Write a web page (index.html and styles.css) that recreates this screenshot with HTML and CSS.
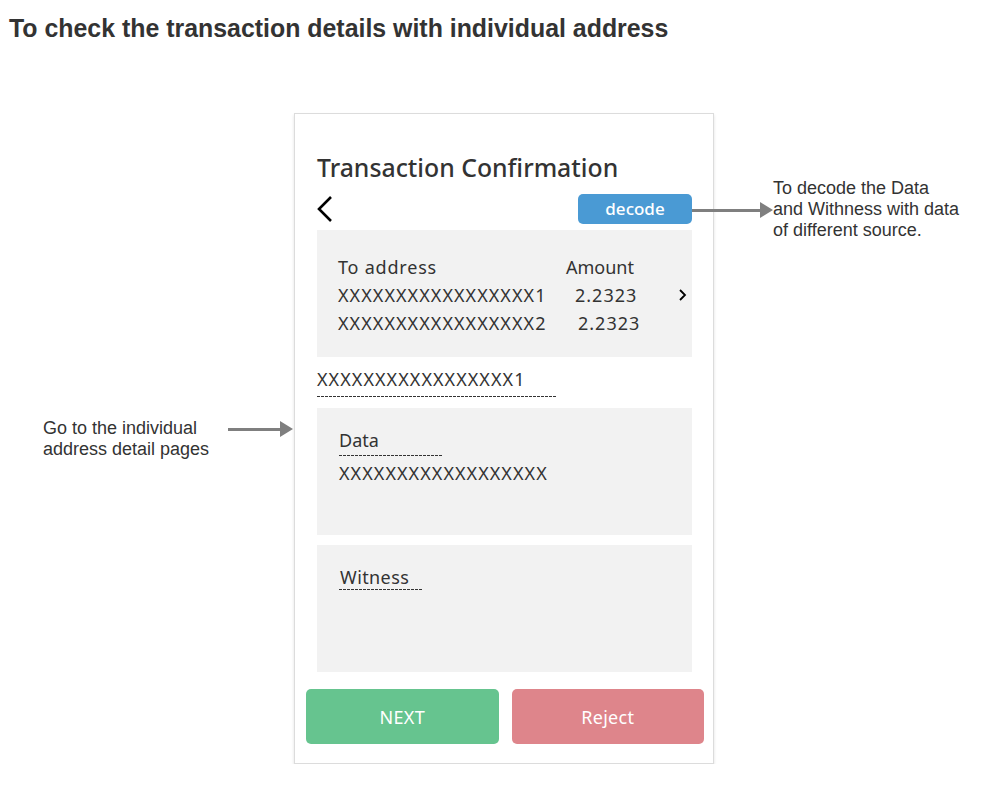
FILE: index.html
```html
<!DOCTYPE html>
<html>
<head>
<meta charset="utf-8">
<link rel="stylesheet" href="styles.css">
</head>
<body>
<h1 class="page-title">To check the transaction details with individual address</h1>
<div class="stage">
  <div class="phone">
    <h2 class="phone-title">Transaction Confirmation</h2>
    <div class="nav-row">
      <svg class="back" width="18" height="28" viewBox="0 0 18 28"><path d="M15 2 L3 14 L15 26" fill="none" stroke="#000" stroke-width="2.6"/></svg>
      <span class="decode">decode</span>
    </div>
    <div class="panel list-panel">
      <div class="list-grid">
        <span class="lbl">To address</span><span class="amt">Amount</span><span></span>
        <span class="xs">XXXXXXXXXXXXXXXXX1</span><span class="num v1">2.2323</span><svg class="chev" width="10" height="14" viewBox="0 0 10 14"><path d="M2 2 L7 7 L2 12" fill="none" stroke="#000" stroke-width="1.8"/></svg>
        <span class="xs">XXXXXXXXXXXXXXXXX2</span><span class="num v2">2.2323</span><span></span>
      </div>
    </div>
    <div class="addr"><span class="dashed addr-text xs">XXXXXXXXXXXXXXXXX1</span></div>
    <div class="panel field-panel">
      <div class="field-label dashed label-data">Data</div>
      <div class="field-value xs">XXXXXXXXXXXXXXXXXX</div>
    </div>
    <div class="panel field-panel witness">
      <div class="field-label dashed label-witness">Witness</div>
    </div>
    <div class="actions">
      <button class="btn next">NEXT</button>
      <button class="btn reject">Reject</button>
    </div>

    <div class="callout callout-right">
      <div class="arrow"><span class="shaft long"></span><span class="head"></span></div>
      <p class="note">To decode the Data<br>and Withness with data<br>of different source.</p>
    </div>
    <div class="callout callout-left">
      <p class="note">Go to the individual<br>address detail pages</p>
      <div class="arrow"><span class="shaft short"></span><span class="head"></span></div>
    </div>
  </div>
</div>
</body>
</html>
```
FILE: styles.css
```css
* { box-sizing: border-box; }
body {
  margin: 0;
  background: #fff;
  font-family: "Liberation Sans", Arial, sans-serif;
  color: #333;
}
.page-title {
  margin: 0;
  padding: 14px 0 0 9px;
  font-size: 24.9px;
  line-height: 28px;
  font-weight: bold;
  color: #333;
}
.stage {
  display: flex;
  justify-content: center;
  padding-top: 71px;
}
.phone {
  position: relative;
  width: 420px;
  height: 651px;
  border: 1px solid #dcdcdc;
  box-shadow: 0 2px 3px rgba(0,0,0,0.12);
  padding: 38px 21px 0 22px;
  font-family: "Noto Sans", "Open Sans", sans-serif;
}
.phone-title {
  margin: 0;
  font-size: 24.8px;
  line-height: 30px;
  font-weight: 500;
  color: #333;
}
.nav-row {
  display: flex;
  justify-content: space-between;
  align-items: center;
  margin-top: 12px;
  height: 30px;
}
.back { display: block; margin-left: -1px; }
.decode {
  width: 114px;
  height: 30px;
  background: #4a9ad4;
  color: #fff;
  border-radius: 5px;
  font-size: 17px;
  line-height: 30px;
  text-align: center;
  font-weight: 500;
}
.panel {
  background: #f2f2f2;
  height: 127px;
}
.list-panel {
  margin-top: 6px;
  padding: 23px 0 0 21px;
}
.list-grid {
  display: grid;
  grid-template-columns: 228px 112px 20px;
  font-size: 18px;
  line-height: 28px;
  color: #333;
  align-items: center;
}
.xs { letter-spacing: 1.05px; }
.lbl { letter-spacing: 0.8px; }
.num { letter-spacing: 1px; }
.v1 { padding-left: 9px; }
.v2 { padding-left: 12px; }
.chev { display: block; }
.addr {
  height: 51px;
  padding-top: 10px;
  font-size: 18px;
  line-height: 24px;
  color: #333;
}
.dashed {
  display: inline-block;
  background-image: linear-gradient(to right, #333 0 3px, transparent 3px 4px);
  background-size: 4px 1px;
  background-repeat: repeat-x;
  background-position: left bottom;
}
.addr-text {
  width: 240px;
  padding-bottom: 6px;
}
.field-panel {
  padding: 20px 0 0 22px;
  font-size: 18px;
  color: #333;
}
.field-label {
  line-height: 24px;
}
.label-data { width: 103px; padding-bottom: 4px; }
.label-witness { width: 84px; padding-left: 1px; padding-bottom: 1px; letter-spacing: 0.4px; }
.field-value {
  line-height: 24px;
  margin-top: 5px;
}
.witness { margin-top: 10px; }
.actions {
  display: flex;
  gap: 13px;
  margin: 17px -12px 0 -11px;
}
.btn {
  flex: 1;
  height: 55px;
  border: none;
  border-radius: 5px;
  color: #fff;
  font-family: "Noto Sans", "Open Sans", sans-serif;
  font-size: 18px;
  letter-spacing: 0.3px;
}
.next { background: #66c48f; }
.reject { background: #de858b; }

.callout {
  position: absolute;
  display: flex;
  font-family: "Liberation Sans", Arial, sans-serif;
}
.note {
  margin: 0;
  font-size: 18px;
  line-height: 21px;
  color: #333;
  white-space: nowrap;
}
.arrow {
  display: flex;
  align-items: center;
  height: 16px;
}
.shaft {
  height: 3px;
  background: #7f7f7f;
}
.shaft.long { width: 68px; }
.shaft.short { width: 52px; }
.head {
  width: 0;
  height: 0;
  border-top: 8px solid transparent;
  border-bottom: 8px solid transparent;
  border-left: 13px solid #7f7f7f;
}
.callout-right {
  left: 397px;
  top: 64px;
  align-items: flex-start;
}
.callout-right .arrow { margin-top: 24px; }
.callout-left {
  right: 420px;
  top: 304px;
  align-items: flex-start;
}
.callout-left .note { margin-right: 19px; }
.callout-left .arrow { margin-top: 3px; }
```
